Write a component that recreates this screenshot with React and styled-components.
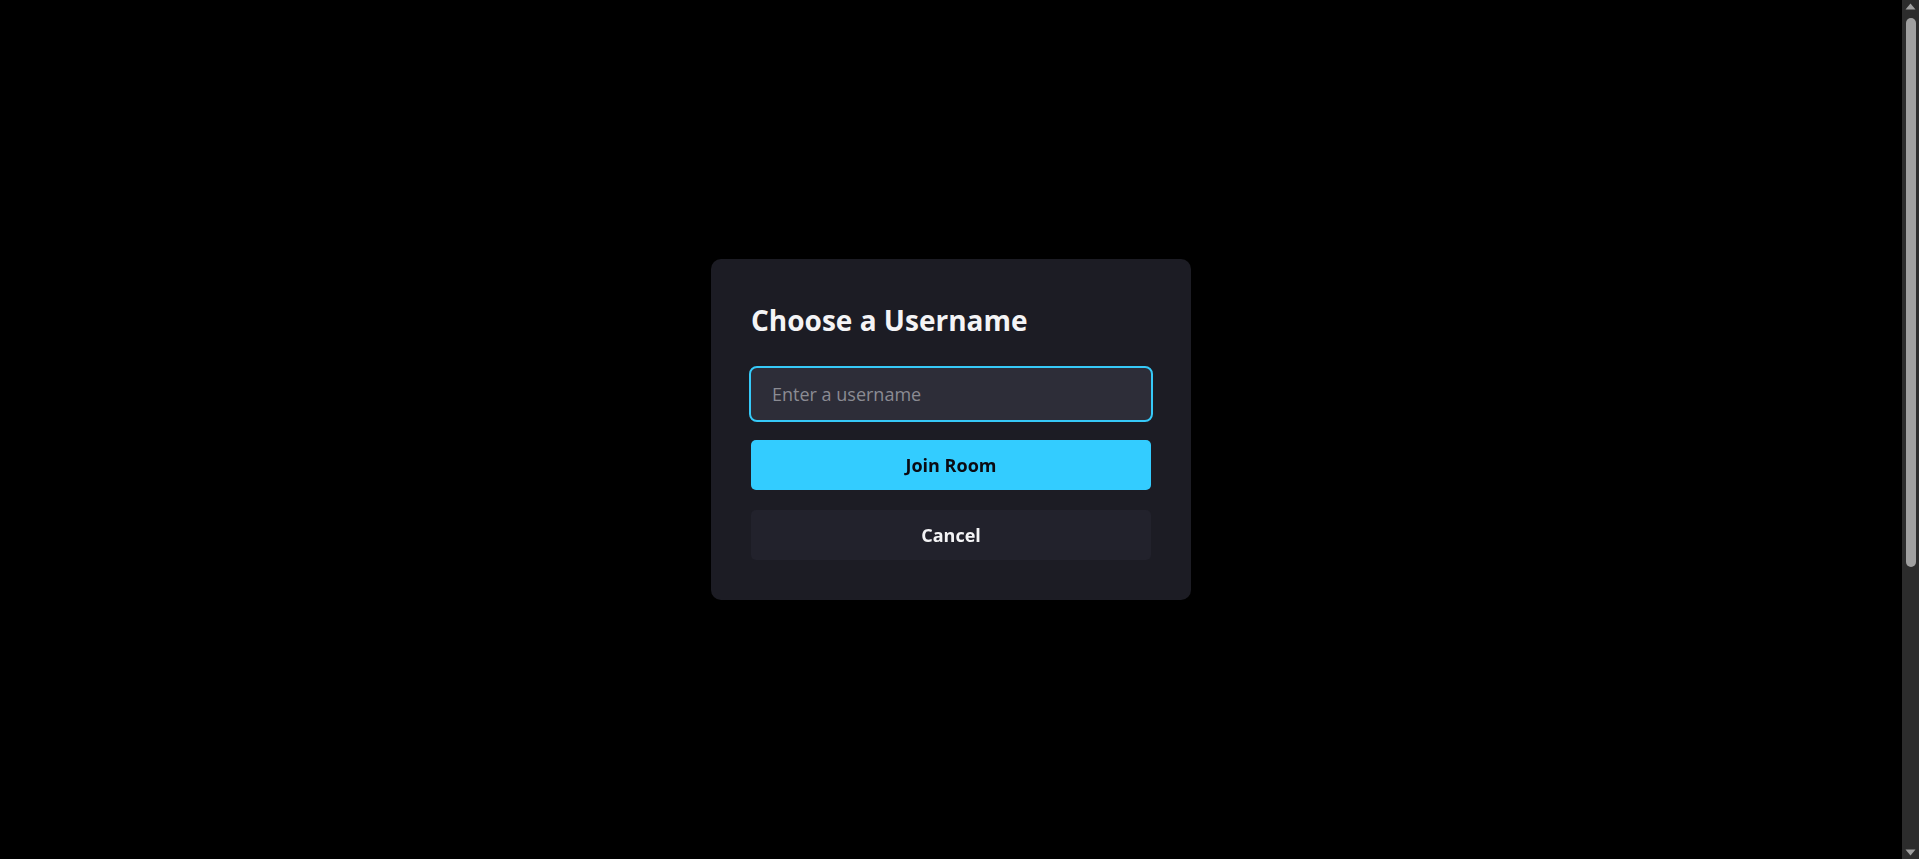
import React from "react";
import styled, { createGlobalStyle } from "styled-components";

const GlobalStyle = createGlobalStyle`
  html {
    color-scheme: dark;
    background: #000;
  }
  body {
    margin: 0;
    background: #000;
    font-family: "Open Sans", "Noto Sans", sans-serif;
    color: #f4f4f6;
  }
  * { box-sizing: border-box; }
`;

const Page = styled.div`
  min-height: 100vh;
  background: #000;
`;

const Overlay = styled.div`
  position: fixed;
  top: 0;
  bottom: 0;
  left: 0;
  right: 17px;
  display: flex;
  align-items: center;
  justify-content: center;
  background: #000;
`;

const Modal = styled.div`
  width: 480px;
  padding: 40px;
  background: #1c1c24;
  border-radius: 10px;
  display: flex;
  flex-direction: column;
`;

const Title = styled.h2`
  margin: 3px 0 30px;
  font-size: 28px;
  line-height: 36px;
  font-weight: 700;
  color: #f4f4f6;
`;

const Input = styled.input`
  width: 400px;
  height: 52px;
  padding: 0 20px;
  border: 1px solid #2d2d38;
  border-radius: 6px;
  background: #2d2d38;
  color: #f4f4f6;
  font-family: inherit;
  font-size: 18px;
  outline: 2px solid #36c9f8;
  outline-offset: 0;
  &::placeholder { color: #8b8b93; }
`;

const Button = styled.button`
  width: 400px;
  height: 50px;
  border: none;
  border-radius: 5px;
  font-family: inherit;
  font-size: 18px;
  font-weight: 700;
  cursor: pointer;
  background: ${(p) => (p.$primary ? "#33ccff" : "#22222c")};
  color: ${(p) => (p.$primary ? "#0b0b12" : "#f4f4f6")};
  margin-top: 20px;
`;

const ScrollBar = styled.div`
  position: fixed;
  top: 0;
  right: 0;
  bottom: 0;
  width: 17px;
  background: #2c2c2c;
  display: flex;
  flex-direction: column;
  align-items: center;
`;

const Arrow = styled.div`
  flex: 0 0 17px;
  display: flex;
  align-items: ${(p) => (p.$down ? "flex-end" : "flex-start")};
  justify-content: center;
  padding: 3px 0;
`;

const Track = styled.div`
  flex: 1;
  width: 100%;
  display: flex;
  justify-content: center;
`;

const Thumb = styled.div`
  width: 10px;
  height: 549px;
  margin-top: 1px;
  border-radius: 5px;
  background: #a0a0a0;
`;

export default function App() {
  return (
    <Page>
      <GlobalStyle />
      <Overlay>
        <Modal>
          <Title>Choose a Username</Title>
          <Input placeholder="Enter a username" autoFocus />
          <Button $primary>Join Room</Button>
          <Button>Cancel</Button>
        </Modal>
      </Overlay>
      <ScrollBar>
        <Arrow>
          <svg width="11" height="7" viewBox="0 0 11 7">
            <path d="M5.5 0.5 L10.5 6.5 L0.5 6.5 Z" fill="#a0a0a0" />
          </svg>
        </Arrow>
        <Track>
          <Thumb />
        </Track>
        <Arrow $down>
          <svg width="11" height="7" viewBox="0 0 11 7">
            <path d="M0.5 0.5 L10.5 0.5 L5.5 6.5 Z" fill="#a0a0a0" />
          </svg>
        </Arrow>
      </ScrollBar>
    </Page>
  );
}
